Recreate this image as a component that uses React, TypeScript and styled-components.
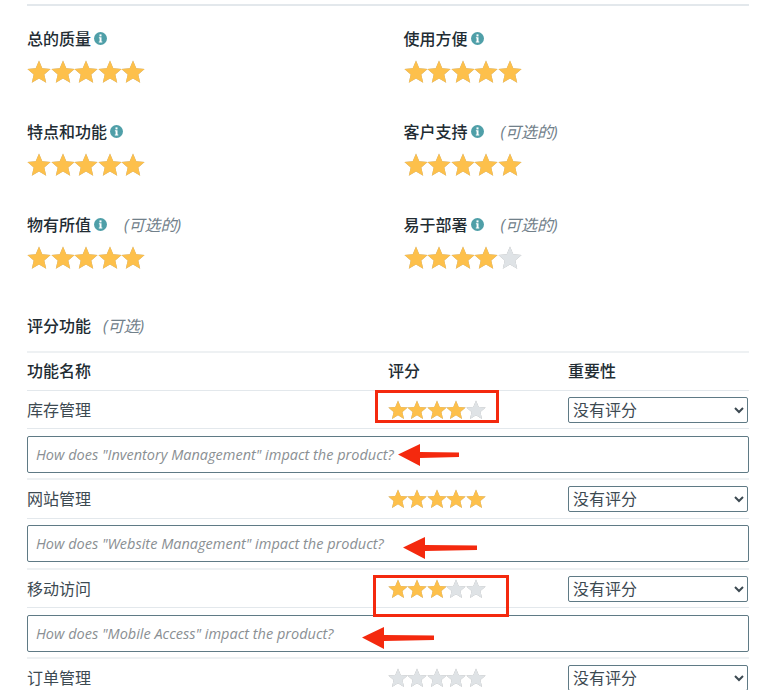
import React from 'react';
import styled, { createGlobalStyle } from 'styled-components';

const GlobalStyle = createGlobalStyle`
  html, body {
    margin: 0;
    padding: 0;
    background: #fff;
    overflow: hidden;
  }
  body {
    font-family: "Open Sans", "Noto Sans CJK SC", sans-serif;
    color: #36424a;
  }
`;

const Page = styled.div`
  position: relative;
  width: 764px;
  height: 690px;
  overflow: hidden;
  padding: 4px 15px 0 27px;
  box-sizing: border-box;
`;

const TopRule = styled.div`
  height: 2px;
  background: #e3e8ec;
`;

const RatingGrid = styled.div`
  display: grid;
  grid-template-columns: 376.5px 1fr;
  grid-auto-rows: 93px;
  padding-top: 20px;
`;

const RatingBlock = styled.div`
  display: flex;
  flex-direction: column;
  gap: 10px;
`;

const LabelRow = styled.div`
  display: flex;
  align-items: center;
  gap: 3px;
  height: 24px;
  font-size: 16px;
  font-weight: 500;
  color: #222c33;
`;

const Optional = styled.span`
  font-style: italic;
  font-weight: 400;
  font-size: 16px;
  color: #71808a;
  margin-left: 14px;
`;

const Stars = styled.div`
  display: flex;
  height: 24px;
  align-items: center;
`;

const StarSvg = styled.svg`
  display: block;
  flex: none;
  overflow: visible;
  filter: drop-shadow(0 0.6px 0.4px rgba(70, 70, 70, 0.45));
`;

const SectionTitle = styled.div`
  display: flex;
  align-items: center;
  height: 24px;
  margin-top: 8px;
  font-size: 16px;
  font-weight: 500;
  color: #222c33;
`;

const SectionNote = styled(Optional)`
  margin-left: 12px;
`;

const Table = styled.div`
  margin-top: 14px;
  border-top: 2px solid #eef1f3;
`;

const Row = styled.div`
  display: grid;
  grid-template-columns: 361px 180px 1fr;
  align-items: center;
  height: 38.2px;
  border-bottom: 1px solid #e3e8ec;
  box-sizing: border-box;
  font-size: 16px;
  color: #3d4a52;
`;

const HeadRow = styled(Row)`
  height: 38px;
`;

const HeadCell = styled.div`
  font-weight: 500;
  color: #222c33;
  margin-top: -3px;
`;

const NameCell = styled.div`
  margin-top: -2px;
`;

const Select = styled.select`
  width: 180px;
  height: 26px;
  font-family: inherit;
  font-size: 16px;
  color: #3d4a52;
  background: #fff;
  border: 1px solid #5f7a85;
  border-radius: 2px;
  padding: 0;
  box-sizing: border-box;
`;

const CommentRow = styled.div`
  display: flex;
  align-items: center;
  height: 51.3px;
  border-bottom: 2px solid #eef1f3;
  box-sizing: border-box;
`;

const CommentBox = styled.input`
  width: 100%;
  height: 37px;
  margin-top: 1px;
  border: 1px solid #5f7a85;
  border-radius: 2px;
  padding: 0 8px;
  box-sizing: border-box;
  font-family: "Open Sans", sans-serif;
  font-style: italic;
  font-size: 14.5px;
  outline: none;
  &::placeholder {
    color: #8a8f93;
    opacity: 1;
  }
`;

const RedBox = styled.div<{ $x: number; $y: number; $w: number; $h: number }>`
  position: absolute;
  left: ${(p) => p.$x}px;
  top: ${(p) => p.$y}px;
  width: ${(p) => p.$w}px;
  height: ${(p) => p.$h}px;
  border: 3px solid #f4290e;
  box-sizing: border-box;
`;

const ArrowSvg = styled.svg<{ $x: number; $y: number }>`
  position: absolute;
  left: ${(p) => p.$x}px;
  top: ${(p) => p.$y}px;
`;

const STAR =
  'M12 0.6 L15.3 8.3 L23.6 9 L17.3 14.5 L19.2 22.7 L12 18.4 L4.8 22.7 L6.7 14.5 L0.4 9 L8.7 8.3 Z';

const StarRow = ({ value, size = 24, pitch = 23.6 }: { value: number; size?: number; pitch?: number }) => (
  <Stars>
    {[0, 1, 2, 3, 4].map((i) => (
      <StarSvg
        key={i}
        width={size}
        height={size}
        viewBox="0 0 24 24"
        style={{ marginRight: i < 4 ? pitch - size : 0 }}
      >
        <path d={STAR} fill={i < value ? '#fdc04b' : '#dfe3e6'} />
      </StarSvg>
    ))}
  </Stars>
);

const InfoIcon = () => (
  <svg width="13" height="13" viewBox="0 0 13 13">
    <circle cx="6.5" cy="6.5" r="6.5" fill="#4f9fa8" />
    <rect x="5.5" y="2.4" width="2" height="2" fill="#fff" />
    <path d="M4.9 5.3h2.6v4.1h0.8v1H4.8v-1h0.8V6.3h-0.7z" fill="#fff" />
  </svg>
);

const Arrow = ({ x, y, width }: { x: number; y: number; width: number }) => (
  <ArrowSvg $x={x} $y={y} width={width} height="24" viewBox={`0 0 ${width} 24`}>
    <path
      d={`M0 11.5 L22 1 L22 9 L${width} 9.5 L${width} 14 L22 15 L22 23 Z`}
      fill="#f4290e"
    />
  </ArrowSvg>
);

const ratings = [
  { label: '总的质量', value: 5 },
  { label: '使用方便', value: 5 },
  { label: '特点和功能', value: 5 },
  { label: '客户支持', value: 5, optional: true },
  { label: '物有所值', value: 5, optional: true },
  { label: '易于部署', value: 4, optional: true },
];

const features = [
  { name: '库存管理', en: 'Inventory Management', value: 4 },
  { name: '网站管理', en: 'Website Management', value: 5 },
  { name: '移动访问', en: 'Mobile Access', value: 3 },
  { name: '订单管理', en: '', value: 0 },
];

const App = () => {
  return (
    <Page>
      <GlobalStyle />
      <TopRule />
      <RatingGrid>
        {ratings.map((r) => (
          <RatingBlock key={r.label}>
            <LabelRow>
              {r.label}
              <InfoIcon />
              {r.optional && <Optional>(可选的)</Optional>}
            </LabelRow>
            <StarRow value={r.value} />
          </RatingBlock>
        ))}
      </RatingGrid>

      <SectionTitle>
        评分功能
        <SectionNote>(可选)</SectionNote>
      </SectionTitle>

      <Table>
        <HeadRow>
          <HeadCell>功能名称</HeadCell>
          <HeadCell>评分</HeadCell>
          <HeadCell>重要性</HeadCell>
        </HeadRow>
        {features.map((f) => (
          <React.Fragment key={f.name}>
            <Row>
              <NameCell>{f.name}</NameCell>
              <StarRow value={f.value} size={20} pitch={19.4} />
              <Select defaultValue="none">
                <option value="none">没有评分</option>
              </Select>
            </Row>
            {f.en && (
              <CommentRow>
                <CommentBox placeholder={`How does "${f.en}" impact the product?`} />
              </CommentRow>
            )}
          </React.Fragment>
        ))}
      </Table>

      <RedBox $x={375} $y={390} $w={124} $h={33} />
      <RedBox $x={373} $y={575} $w={136} $h={42} />
      <Arrow x={398} y={443} width={61} />
      <Arrow x={403} y={536} width={74} />
      <Arrow x={362} y={626} width={72} />
    </Page>
  );
};

export default App;
